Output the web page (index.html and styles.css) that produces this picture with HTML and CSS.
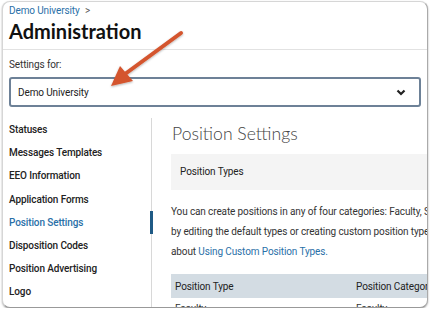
FILE: index.html
```html
<!DOCTYPE html>
<html lang="en">
<head>
    <title>Administration</title>
    <link rel="stylesheet" href="styles.css">
</head>
<body>
    <div class="window">
        <div class="header">
            <div class="crumb"><a href="#">Demo University</a> <span class="sep">&gt;</span></div>
            <h1>Administration</h1>
        </div>
        <div class="settings-for">
            <div class="label">Settings for:</div>
            <div class="select">
                <span>Demo University</span>
                <svg width="10" height="7" viewBox="0 0 10 7"><polyline points="1.5,1.5 5,5 8.5,1.5" fill="none" stroke="#222" stroke-width="2.2"/></svg>
            </div>
        </div>
        <div class="content">
            <ul class="sidebar">
                <li>Statuses</li>
                <li>Messages Templates</li>
                <li>EEO Information</li>
                <li>Application Forms</li>
                <li class="active">Position Settings</li>
                <li>Disposition Codes</li>
                <li>Position Advertising</li>
                <li>Logo</li>
            </ul>
            <div class="main">
                <h2>Position Settings</h2>
                <div class="panel">Position Types</div>
                <p>
                    <span>You can create positions in any of four categories: Faculty, Staff, Student, or Other. You can customize</span>
                    <span>by editing the default types or creating custom position types. For more information, read</span>
                    <span>about <a href="#">Using Custom Position Types.</a></span>
                </p>
                <table>
                    <tr><th class="col-type">Position Type</th><th>Position Category</th></tr>
                    <tr><td class="col-type">Faculty</td><td>Faculty</td></tr>
                </table>
            </div>
        </div>
        <svg class="arrow" width="90" height="70" viewBox="0 0 90 70">
            <defs>
                <filter id="sh" x="-20%" y="-20%" width="140%" height="140%">
                    <feDropShadow dx="0" dy="1" stdDeviation="1" flood-opacity="0.3"/>
                </filter>
            </defs>
            <g filter="url(#sh)">
                <line x1="86" y1="11" x2="30" y2="52" stroke="#d4552e" stroke-width="4" stroke-linecap="round"/>
                <polygon points="16,64 25,44 38,59" fill="#d4552e"/>
            </g>
        </svg>
    </div>
</body>
</html>
```

FILE: styles.css
```css
body {
    margin: 0;
    background: #fff;
    font-family: Roboto, "Liberation Sans", sans-serif;
    font-size: 10px;
    letter-spacing: -0.12px;
    color: #333;
}
.window {
    position: relative;
    margin: 1px 2px 0 2px;
    height: 305px;
    border: 1px solid #d6d6d6;
    border-bottom-color: #999;
    border-right-color: #aaa;
    border-radius: 8px;
    box-shadow: 0 1px 2px rgba(0, 0, 0, 0.35);
    overflow: hidden;
    background: #fff;
}
.header {
    padding: 2px 6px 5px;
    border-bottom: 1px solid #e2e2e2;
}
.crumb {
    line-height: 14px;
}
.crumb a {
    color: #2a70a8;
    text-decoration: none;
}
.crumb .sep {
    color: #555;
    margin-left: 3px;
}
h1 {
    margin: 0;
    font-family: Lato, sans-serif;
    font-weight: 700;
    font-size: 20px;
    letter-spacing: 0;
    line-height: 26px;
    color: #111;
}
.settings-for {
    padding: 8px 6px 0;
}
.label {
    line-height: 14px;
    color: #333;
}
.select {
    margin-top: 5px;
    width: 388px;
    height: 26px;
    border: 2px solid #6d8197;
    border-radius: 3px;
    display: flex;
    align-items: center;
    justify-content: space-between;
    padding: 0 13px 0 7px;
    color: #222;
}
.content {
    display: flex;
    margin-top: 11px;
}
.sidebar {
    list-style: none;
    margin: 0;
    padding: 0;
    width: 148px;
    flex-shrink: 0;
    border-right: 1px solid #d8d8d8;
    height: 190px;
}
.sidebar li {
    height: 23.2px;
    line-height: 23.2px;
    padding-left: 6px;
    font-weight: 500;
    color: #222;
    white-space: nowrap;
    position: relative;
}
.sidebar li.active {
    color: #2a70a8;
}
.sidebar li.active::after {
    content: "";
    position: absolute;
    right: -2px;
    top: 0;
    width: 3px;
    height: 100%;
    background: #1f5a85;
}
.main {
    padding-left: 19px;
    width: 330px;
    flex-shrink: 0;
}
h2 {
    margin: 3px 0 0 1px;
    font-family: Lato, sans-serif;
    font-weight: 300;
    font-size: 17.6px;
    letter-spacing: 0;
    line-height: 26px;
    color: #444;
}
.panel {
    margin-top: 7px;
    height: 36px;
    line-height: 36px;
    background: #f4f4f4;
    padding-left: 9px;
    color: #222;
}
p {
    margin: 12px 0 0;
    line-height: 20px;
    color: #333;
}
p span {
    display: block;
    white-space: nowrap;
}
p a {
    color: #2a70a8;
    text-decoration: none;
}
table {
    margin-top: 12px;
    width: 330px;
    border-collapse: collapse;
    font-size: 10px;
}
th {
    background: #d3dce3;
    height: 24px;
    text-align: left;
    font-weight: 400;
    color: #222;
    padding: 0 0 0 4px;
}
td {
    height: 20px;
    padding: 0 0 0 4px;
}
.col-type {
    width: 177px;
}
.arrow {
    position: absolute;
    left: 92px;
    top: 20px;
}
```
